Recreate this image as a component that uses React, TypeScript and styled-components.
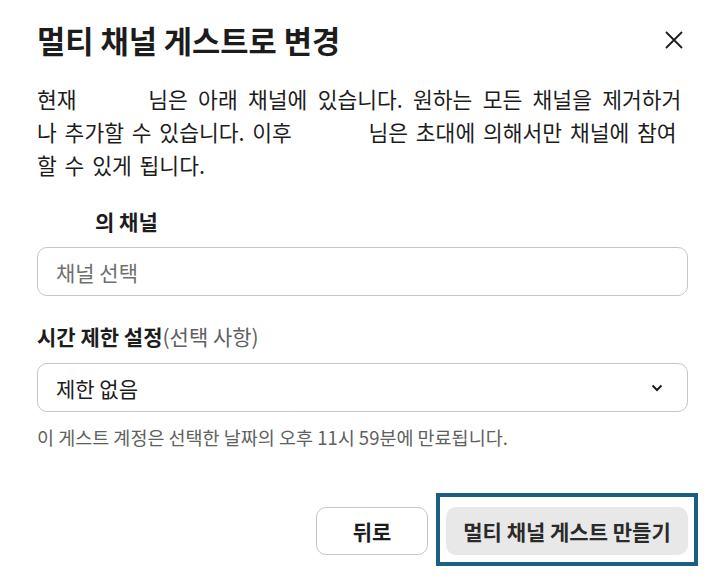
import React from "react";
import styled, { createGlobalStyle } from "styled-components";

const Global = createGlobalStyle`
  html, body { margin: 0; padding: 0; background: #ffffff; }
  body { font-family: "Noto Sans CJK KR", "Noto Sans", sans-serif; color: #1d1c1d; }
  * { box-sizing: border-box; }
`;

const Dialog = styled.div`
  width: 723px;
  height: 588px;
  padding: 20px 35px 0 37px;
  display: flex;
  flex-direction: column;
  background: #ffffff;
`;

const Header = styled.div`
  display: flex;
  align-items: center;
  justify-content: space-between;
  height: 40px;
`;

const Title = styled.h1`
  margin: 0;
  font-size: 30.7px;
  font-weight: 700;
  line-height: 40px;
  color: #1d1c1d;
`;

const CloseButton = styled.button`
  border: none;
  background: transparent;
  padding: 0;
  width: 24px;
  height: 24px;
  margin-right: 2px;
  display: flex;
  align-items: center;
  justify-content: center;
  color: #1d1c1d;
`;

const Description = styled.p`
  margin: 22px 0 0;
  font-size: 21.5px;
  line-height: 33px;
  color: #1d1c1d;
  word-spacing: 3px;
  white-space: nowrap;
`;

const Wide = styled.span`
  word-spacing: 5.5px;
`;

const Hidden = styled.span<{ $w: number }>`
  display: inline-block;
  width: ${(p) => p.$w}px;
`;

const Label = styled.div<{ $indent?: number }>`
  font-size: 21px;
  font-weight: 700;
  line-height: 24px;
  padding-left: ${(p) => p.$indent ?? 0}px;
  color: #1d1c1d;
`;

const Optional = styled.span`
  font-weight: 400;
  color: #616061;
`;

const Field = styled.div`
  height: 49px;
  border: 1px solid #c6c6c6;
  border-radius: 10px;
  display: flex;
  align-items: center;
  justify-content: space-between;
  padding: 0 24px 0 18px;
  font-size: 21px;
  color: #1d1c1d;
`;

const Placeholder = styled.span`
  color: #6f6f6f;
`;

const Hint = styled.div`
  font-size: 18.5px;
  line-height: 22px;
  color: #616061;
`;

const Footer = styled.div`
  display: flex;
  justify-content: flex-end;
  gap: 18px;
`;

const Button = styled.button<{ $primary?: boolean }>`
  position: relative;
  height: 48px;
  border-radius: 10px;
  font-family: inherit;
  font-size: 21px;
  font-weight: 700;
  color: ${(p) => (p.$primary ? "#2b2a2b" : "#1d1c1d")};
  padding: 0;
  width: ${(p) => (p.$primary ? 242 : 112)}px;
  border: ${(p) => (p.$primary ? "none" : "1px solid #c6c6c6")};
  background: ${(p) => (p.$primary ? "#e8e8e8" : "#ffffff")};
  ${(p) =>
    p.$primary &&
    `
    &::after {
      content: "";
      position: absolute;
      top: -14px;
      bottom: -11px;
      left: -10px;
      right: -10px;
      border: 4px solid #1b5f80;
      pointer-events: none;
    }
  `}
`;

const Spacer = styled.div<{ $h: number }>`
  height: ${(p) => p.$h}px;
  flex: none;
`;

export default function App() {
  return (
    <>
      <Global />
      <Dialog>
        <Header>
          <Title>멀티 채널 게스트로 변경</Title>
          <CloseButton aria-label="닫기">
            <svg width="20" height="20" viewBox="0 0 20 20">
              <path d="M2 2 L18 18 M18 2 L2 18" stroke="#1d1c1d" strokeWidth="1.8" fill="none" />
            </svg>
          </CloseButton>
        </Header>
        <Description>
          현재 <Hidden $w={56} /> 님은<Wide> 아래 채널에 있습니다. 원하는 모든 채널을 제거하거</Wide>
          <br />나 추가할 수 있습니다. 이후 <Hidden $w={61} /> 님은 초대에 의해서만 채널에 참여
          <br />할 수 있게 됩니다.
        </Description>
        <Spacer $h={28} />
        <Label $indent={58}>의 채널</Label>
        <Spacer $h={14} />
        <Field>
          <Placeholder>채널 선택</Placeholder>
        </Field>
        <Spacer $h={28} />
        <Label>
          시간 제한 설정<Optional>(선택 사항)</Optional>
        </Label>
        <Spacer $h={15} />
        <Field>
          <span>제한 없음</span>
          <svg width="12" height="8" viewBox="0 0 12 8">
            <path d="M1.5 1.5 L6 6 L10.5 1.5" stroke="#1d1c1d" strokeWidth="2" fill="none" />
          </svg>
        </Field>
        <Spacer $h={14} />
        <Hint>이 게스트 계정은 선택한 날짜의 오후 11시 59분에 만료됩니다.</Hint>
        <Spacer $h={59} />
        <Footer>
          <Button>뒤로</Button>
          <Button $primary>멀티 채널 게스트 만들기</Button>
        </Footer>
      </Dialog>
    </>
  );
}
